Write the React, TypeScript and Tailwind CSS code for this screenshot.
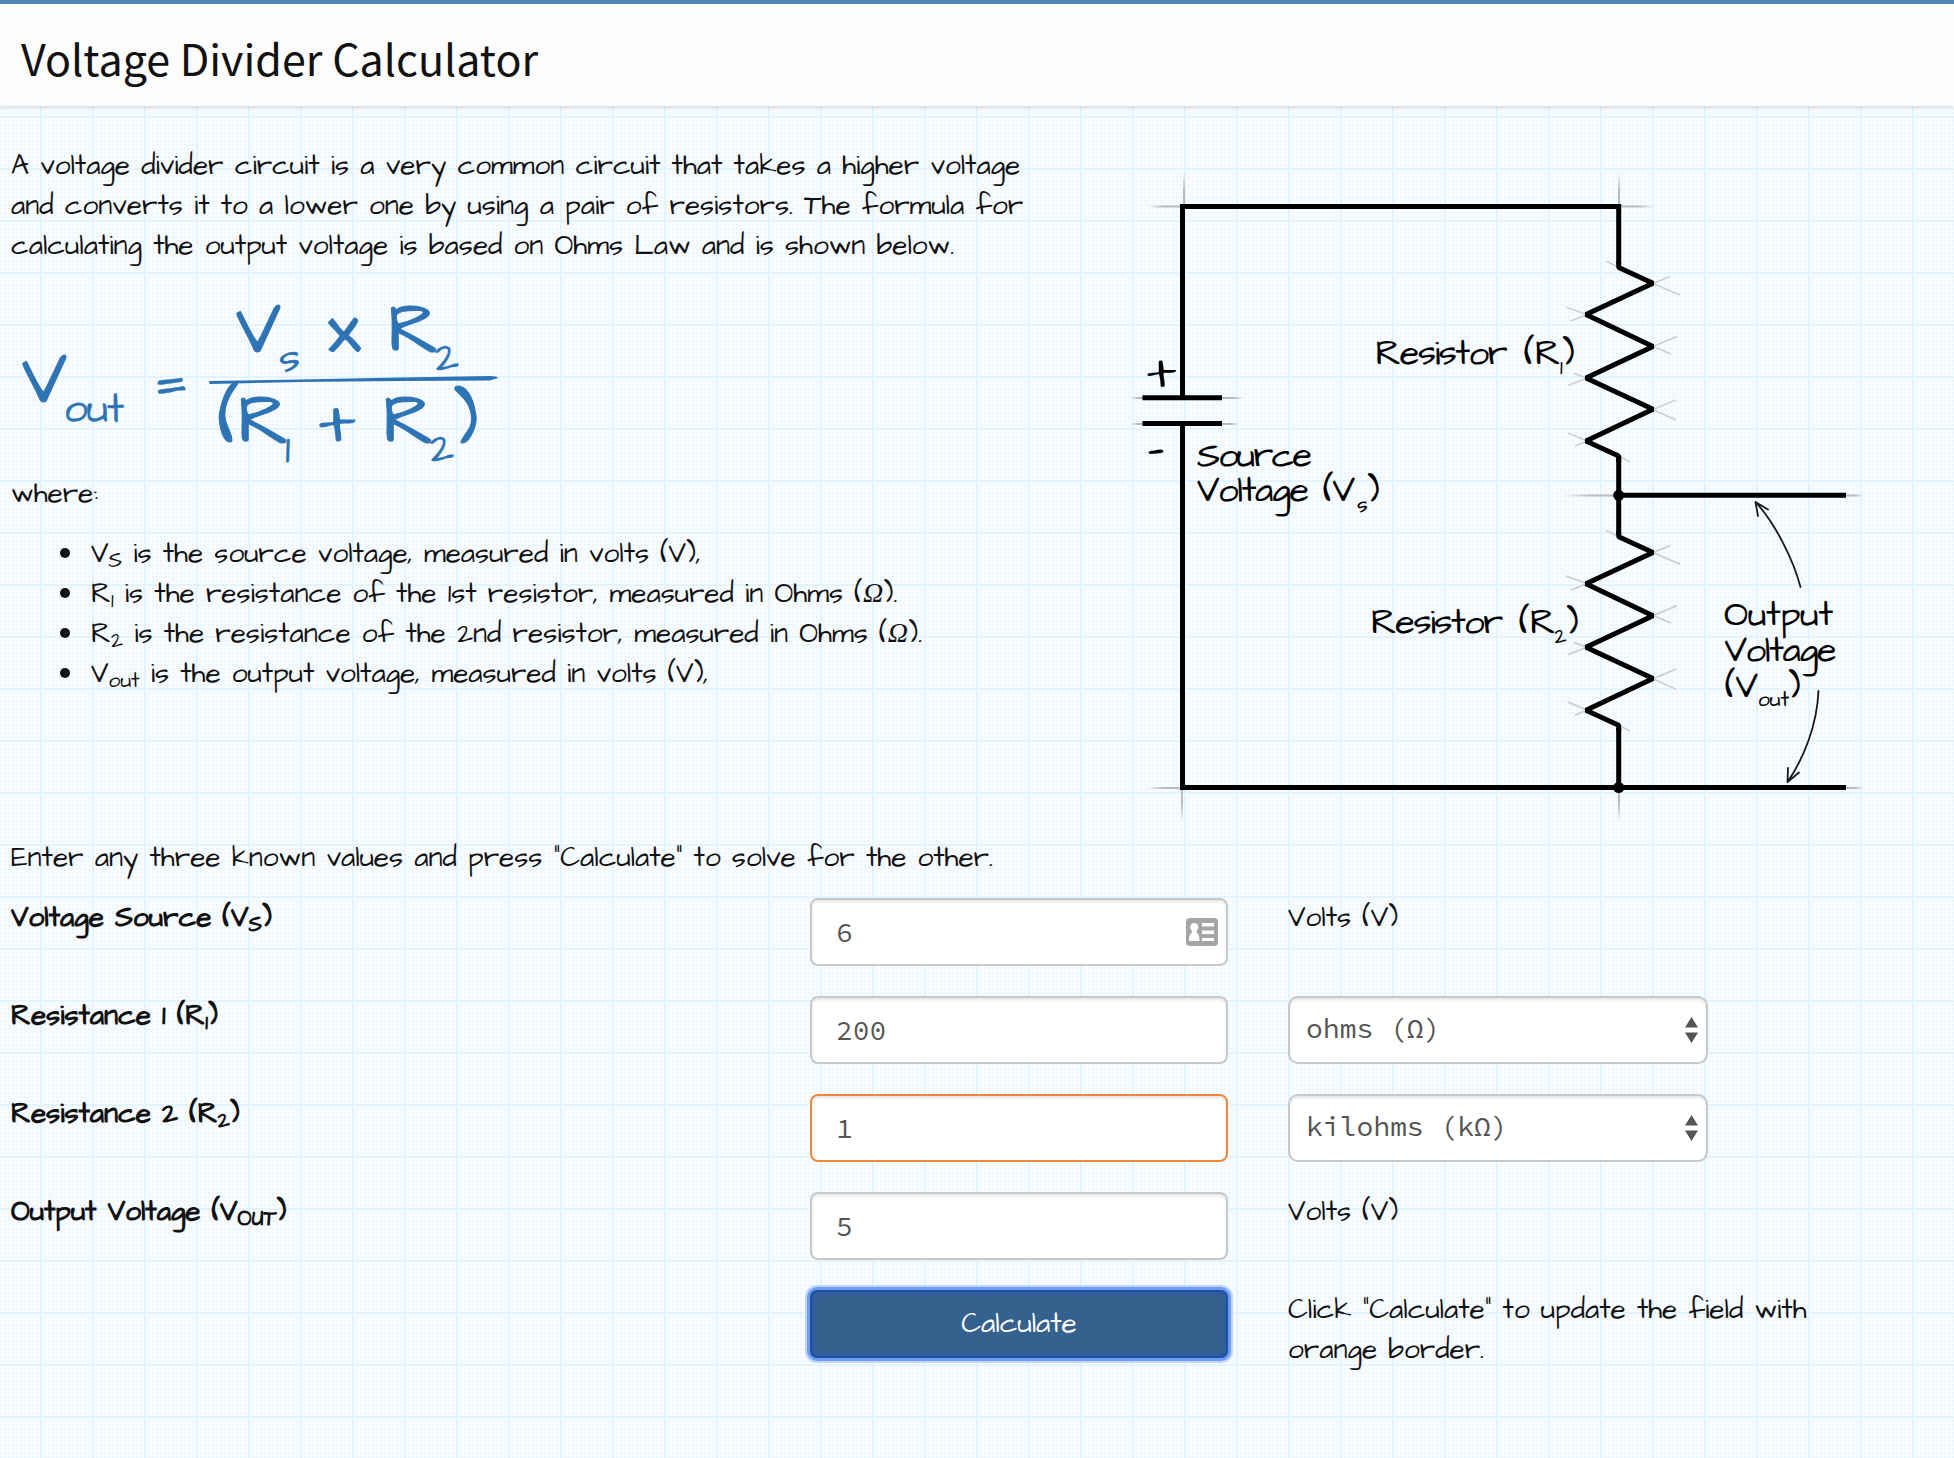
import type { ReactNode } from "react";

const hand = 'font-["Architects_Daughter",cursive]';
const mono = 'font-["Source_Code_Pro","Liberation_Mono",monospace]';

const paper =
  "bg-[#f9fcff] bg-[linear-gradient(to_right,#e3f3ff_2px,transparent_2px),linear-gradient(to_bottom,#e3f3ff_2px,transparent_2px),linear-gradient(to_right,#f9fcff_2px,transparent_2px),linear-gradient(to_bottom,#f9fcff_2px,#ebf6fe_2px)] bg-[size:52px_52px,52px_52px,4px_4px,4px_4px] bg-[position:40px_12px,40px_12px,42px_14px,42px_14px]";

function Sub({ children }: { children: ReactNode }) {
  return <sub className="relative -bottom-[0.25em] align-baseline text-[21px] leading-none">{children}</sub>;
}

function Ohm() {
  return <span className='inline-block w-[21px] text-center font-["Liberation_Serif",serif] leading-none italic'>Ω</span>;
}

function Formula() {
  return (
    <svg
      className="block h-[172px] w-[500px] overflow-visible"
      viewBox="11 296 500 172"
      fill="#2e74b5"
      stroke="#2e74b5"
      strokeWidth="0.9"
      strokeLinejoin="round"
      fontSize="72"
    >
      <text x="22" y="402">V</text>
      <text x="64" y="422" fontSize="42" strokeWidth="0.3" textLength="60">out</text>
      <text x="153" y="403" strokeWidth="0.3">=</text>
      <text x="236" y="352">V</text>
      <text x="279" y="371" fontSize="42" strokeWidth="0.3">s</text>
      <text x="327" y="352">x</text>
      <text x="388" y="352">R</text>
      <text x="435" y="371" fontSize="42" strokeWidth="0.3">2</text>
      <path
        d="M209.500 381 L300 379.500 L400 377.500 L490 376 Q498 376 498 378 L490 380.500 L400 381 L300 382 L210 384 Q208.500 382.500 209.500 381Z"
        stroke="none"
      />
      <text x="218" y="443">(</text>
      <text x="238" y="443">R</text>
      <text x="285" y="462" fontSize="42" strokeWidth="0.3">1</text>
      <text x="319" y="443">+</text>
      <text x="383" y="443">R</text>
      <text x="430" y="462" fontSize="42" strokeWidth="0.3">2</text>
      <text x="453" y="443">)</text>
    </svg>
  );
}

function Resistor() {
  return (
    <>
      <path
        d="M1619 267.500L1606 261M1653 283.500L1670 276.500M1653 283.500L1680 295M1587 314.500L1566 307M1587 314.500L1571 321M1653 346.500L1677 336.500M1653 346.500L1671 354M1587 378L1568 385.500M1587 378L1574 373.500M1653 409.500L1676 400M1653 409.500L1676 420M1587 441L1568 433M1587 441L1575 446M1619 456L1630 462"
        stroke="#cdd1d4"
        strokeWidth="1.800"
      />
      <path
        d="M1618.700 262V267.500L1653 283.300L1586 314.500L1653 346.500L1586 378L1653 409.300L1586 441L1618.700 456V462"
        stroke="#000"
        strokeWidth="5"
        strokeLinejoin="bevel"
      />
    </>
  );
}

function Circuit() {
  return (
    <svg className="block h-[674px] w-[760px] overflow-visible" viewBox="1120 164 760 674" fill="none">
      <defs>
        <linearGradient id="up" x1="0" y1="172" x2="0" y2="204" gradientUnits="userSpaceOnUse">
          <stop offset="0" stopColor="#b8bbbd" stopOpacity="0" />
          <stop offset=".6" stopColor="#b8bbbd" />
        </linearGradient>
        <linearGradient id="down" x1="0" y1="822" x2="0" y2="790" gradientUnits="userSpaceOnUse">
          <stop offset="0" stopColor="#b8bbbd" stopOpacity="0" />
          <stop offset=".6" stopColor="#b8bbbd" />
        </linearGradient>
        <linearGradient id="left" x1="0" x2="1">
          <stop offset="0" stopColor="#b8bbbd" stopOpacity="0" />
          <stop offset=".5" stopColor="#b8bbbd" />
        </linearGradient>
        <linearGradient id="right" x1="1" x2="0">
          <stop offset="0" stopColor="#b8bbbd" stopOpacity="0" />
          <stop offset=".5" stopColor="#b8bbbd" />
        </linearGradient>
      </defs>
      <path d="M1183 172h2v32h-2zM1618 172h2v32h-2z" fill="url(#up)" />
      <path d="M1181 790h2v32h-2zM1618 790h2v32h-2z" fill="url(#down)" />
      <rect x="1148" y="205.500" width="32" height="2" fill="url(#left)" />
      <rect x="1621" y="205.500" width="34" height="2" fill="url(#right)" />
      <rect x="1131" y="397" width="14" height="2" fill="url(#left)" />
      <rect x="1222" y="397" width="22" height="2" fill="url(#right)" />
      <rect x="1131" y="423" width="14" height="2" fill="url(#left)" />
      <rect x="1222" y="423" width="17" height="2" fill="url(#right)" />
      <rect x="1564" y="494.500" width="52" height="2" fill="url(#left)" />
      <rect x="1846" y="494.500" width="18" height="2" fill="url(#right)" />
      <rect x="1148" y="787" width="32" height="2" fill="url(#left)" />
      <rect x="1846" y="787" width="18" height="2" fill="url(#right)" />

      <path
        d="M1142.500 397.700H1222M1142.500 423.400H1222M1182.500 397.700V206.500H1618.700V264M1182.500 423V787.500H1846M1618.700 458V536M1618.700 495.300H1846M1618.700 728V787.500"
        stroke="#000"
        strokeWidth="5"
      />
      <Resistor />
      <g transform="translate(0 269.200)">
        <Resistor />
      </g>
      <circle cx="1618.700" cy="495.300" r="5.500" fill="#000" />
      <circle cx="1618.700" cy="787.500" r="5.500" fill="#000" />

      <g fill="#000" stroke="#000" strokeWidth="0.15" fontSize="36">
        <text x="1147" y="389" fontSize="58">+</text>
        <text x="1147" y="466" fontSize="56">-</text>
        <text x="1197" y="465.500" textLength="115">Source</text>
        <text x="1197" y="501" textLength="112">Voltage</text>
        <text x="1323" y="501">(</text>
        <text x="1332.500" y="501">V</text>
        <text x="1357" y="511" fontSize="21">s</text>
        <text x="1367" y="501">)</text>
        <text x="1375.500" y="363.500" textLength="132">Resistor</text>
        <text x="1524" y="363.500">(</text>
        <text x="1535" y="363.500">R</text>
        <text x="1560" y="373.500" fontSize="21">1</text>
        <text x="1562" y="363.500">)</text>
        <text x="1371" y="632.500" textLength="132">Resistor</text>
        <text x="1519" y="632.500">(</text>
        <text x="1530" y="632.500">R</text>
        <text x="1554.500" y="642.500" fontSize="21">2</text>
        <text x="1566" y="632.500">)</text>
        <text x="1724" y="624.500" textLength="109">Output</text>
        <text x="1724.500" y="660.500" textLength="112">Voltage</text>
        <text x="1725" y="696.500">(</text>
        <text x="1735.500" y="696.500">V</text>
        <text x="1758" y="705.500" fontSize="21">out</text>
        <text x="1788" y="696.500">)</text>
      </g>

      <g stroke="#1a1a1a" strokeWidth="1.800" strokeLinecap="round" strokeLinejoin="round">
        <path d="M1800.500 587C1794 562 1776 524 1755.500 502M1768 509.500L1755.500 502L1758 516" />
        <path d="M1818.500 691C1817 725 1804 758 1787.500 782M1788 768L1787.500 782L1799 772.500" />
      </g>
    </svg>
  );
}

function Item({ children }: { children: ReactNode }) {
  return (
    <li className="before:mr-[21px] before:-ml-[31px] before:inline-block before:size-[10px] before:rounded-full before:bg-[#111] before:align-[4px] before:content-['']">
      {children}
    </li>
  );
}

function Row({ label, children }: { label: ReactNode; children: ReactNode }) {
  return (
    <div className="flex h-[68px]">
      <div className="w-[799px] shrink-0 font-bold">{label}</div>
      {children}
    </div>
  );
}

function ContactCard() {
  return (
    <svg className="h-7 w-8" viewBox="0 0 32 28">
      <rect width="32" height="28" rx="4" fill="#a5a5a5" />
      <ellipse cx="8.300" cy="9.300" rx="4" ry="4.300" fill="#fff" />
      <path d="M5.800 12h5v3c2 1 2.700 3 2.700 8h-10.500c0-5 .8-7 2.800-8z" fill="#fff" />
      <path d="M16 5h12v3.500h-12zM16 12.500h12v3.500h-12zM16 20h12v3h-12z" fill="#fff" />
    </svg>
  );
}

function Field({ value, active, icon }: { value: string; active?: boolean; icon?: boolean }) {
  return (
    <div
      className={
        `${mono} flex w-[418px] shrink-0 items-center justify-between rounded-lg border-2 bg-white pl-[24px] pr-2 text-[#555] shadow-[inset_0_2px_3px_rgba(0,0,0,0.1)] ` +
        (active ? "border-[#f0883a]" : "border-[#c8c8c8]")
      }
    >
      <span>{value}</span>
      {icon && <ContactCard />}
    </div>
  );
}

function Select({ value }: { value: string }) {
  return (
    <div
      className={`${mono} ml-[60px] flex w-[420px] shrink-0 items-center justify-between rounded-[10px] border-2 border-[#c8c8c8] bg-white pl-[16px] pr-2 text-[#555] shadow-[inset_0_2px_3px_rgba(0,0,0,0.1)]`}
    >
      <span className="pb-1">{value}</span>
      <svg className="h-[26px] w-[13px]" viewBox="0 0 13 26" fill="#555">
        <path d="M6.500 0L13 10.500H0zM6.500 26L13 15.500H0z" />
      </svg>
    </div>
  );
}

export default function App() {
  return (
    <div className={`${hand} ${paper} h-[1458px] w-[1954px] overflow-hidden text-[28px] leading-[40px] text-[#111]`}>
      <header className="relative h-[106px] border-t-4 border-[#5089b5] bg-[#fcfcfc] px-[21px] shadow-[0_1px_4px_rgba(0,0,0,0.18)]">
        <h1 className='pt-[13px] font-["Noto_Sans_CJK_SC",sans-serif] text-[43px] leading-[80px]'>
          Voltage Divider Calculator
        </h1>
      </header>

      <main className="pl-[11px]">
        <div className="flex pt-[58px]">
          <section className="w-[1109px] shrink-0">
            <p className="-mt-[18px]">
              A voltage divider circuit is a very common circuit that takes a higher voltage
              <br />
              and converts it to a lower one by using a pair of resistors. The formula for
              <br />
              calculating the output voltage is based on Ohms Law and is shown below.
            </p>
            <div className="mt-[30px]">
              <Formula />
            </div>
            <p className="mt-[6px]">where:</p>
            <ul className="mt-5 pl-[80px]">
              <Item>V<Sub>S</Sub> is the source voltage, measured in volts (V),</Item>
              <Item>R<Sub>1</Sub> is the resistance of the 1st resistor, measured in Ohms (<Ohm />).</Item>
              <Item>R<Sub>2</Sub> is the resistance of the 2nd resistor, measured in Ohms (<Ohm />).</Item>
              <Item>V<Sub>out</Sub> is the output voltage, measured in volts (V),</Item>
            </ul>
          </section>
          <Circuit />
        </div>

        <p>Enter any three known values and press "Calculate" to solve for the other.</p>

        <form className="mt-5 flex flex-col gap-[30px]">
          <Row label={<>Voltage Source (V<Sub>S</Sub>)</>}>
            <Field value="6" icon />
            <div className="ml-[60px]">Volts (V)</div>
          </Row>
          <Row label={<>Resistance 1 (R<Sub>1</Sub>)</>}>
            <Field value="200" />
            <Select value="ohms (Ω)" />
          </Row>
          <Row label={<>Resistance 2 (R<Sub>2</Sub>)</>}>
            <Field value="1" active />
            <Select value="kilohms (kΩ)" />
          </Row>
          <Row label={<>Output Voltage (V<Sub>OUT</Sub>)</>}>
            <Field value="5" />
            <div className="ml-[60px]">Volts (V)</div>
          </Row>
          <Row label="">
            <button
              type="button"
              className="w-[418px] shrink-0 rounded-[7px] border-2 border-[#1d4ea0] bg-[#35618e] text-white shadow-[0_0_0_3px_#6f9ff5,0_0_0_5px_#c0d5f9,inset_0_0_4px_1px_#2a5cae]"
            >
              Calculate
            </button>
            <p className="ml-[60px] w-[560px]">
              Click "Calculate" to update the field with
              <br />
              orange border.
            </p>
          </Row>
        </form>
      </main>
    </div>
  );
}
